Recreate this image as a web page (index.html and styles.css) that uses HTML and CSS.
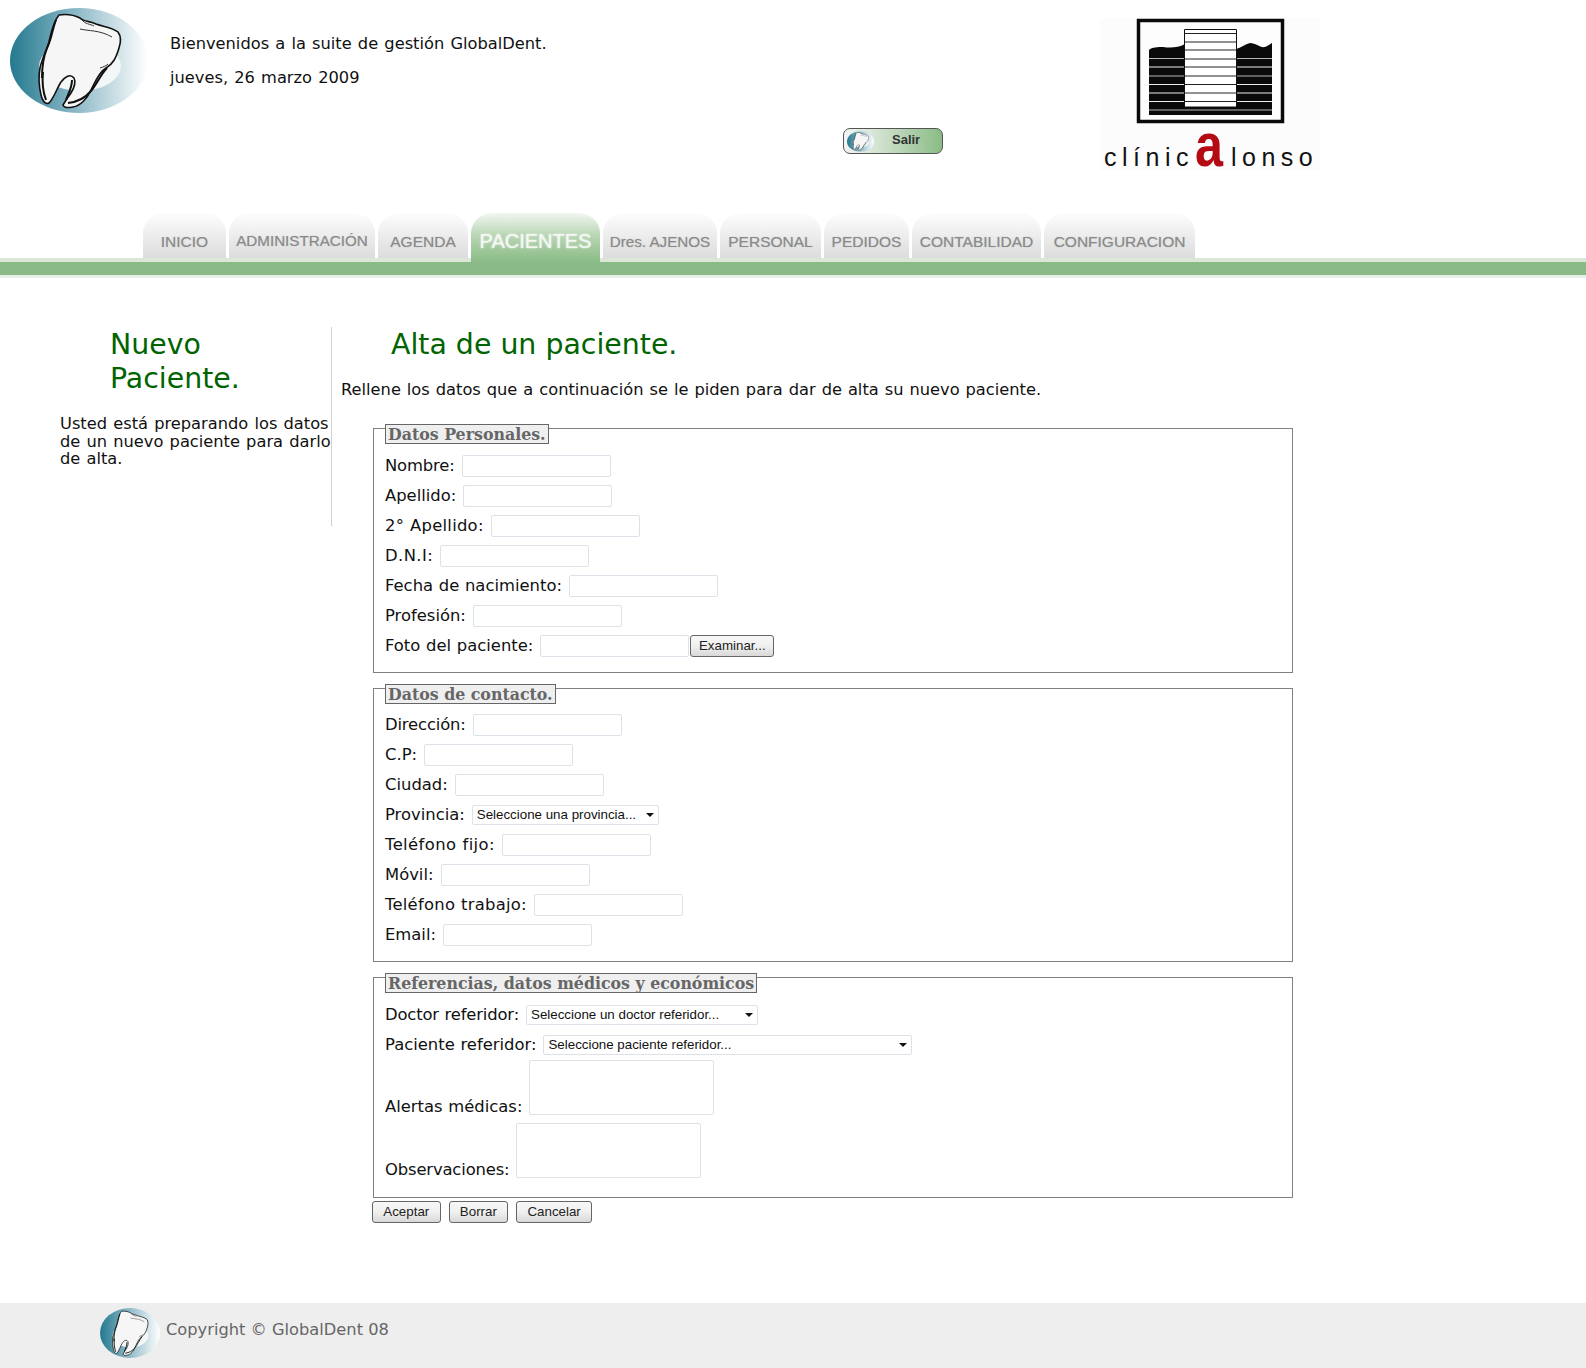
FILE: index.html
```html
<!DOCTYPE html>
<html lang="es">
<head>
<meta charset="utf-8">
<title>GlobalDent</title>
<link rel="stylesheet" href="styles.css">
</head>
<body>
<svg class="defs" width="0" height="0" aria-hidden="true">
  <defs>
    <linearGradient id="globe" x1="0" x2="1" y1="0" y2="0">
      <stop offset="0" stop-color="#24798f"/>
      <stop offset=".45" stop-color="#86b5c4"/>
      <stop offset="1" stop-color="#ffffff"/>
    </linearGradient>
    <symbol id="tooth" viewBox="10 8 138 105" preserveAspectRatio="none">
      <ellipse cx="79" cy="60.500" rx="69" ry="52.500" fill="url(#globe)"/>
      <ellipse cx="80" cy="66" rx="41" ry="25" fill="#f4f7f8"/>
      <path d="M59 15C66 14 74 15 80 18C84 22 90 21 96 24C104 27 112 27 118 32C121 36 121 42 119 48C116 58 113 64 106 68C99 72 95 82 91 90C87 99 80 106 73 107C68 108 64 108 63 105C66 100 68 97 71 93C74 88 76 82 74 78C70 73 65 77 61 82C57 88 54 98 49 103C45 105 42 100 41 95C39 86 38 78 40 68C42 58 47 50 49 42C51 33 53 22 59 15Z" fill="#f6f6f6" stroke="#111" stroke-width="1.600" stroke-linejoin="round"/>
      <path d="M56 20C52 30 52 38 47 48C43 58 42 68 42 78M43 72C42 82 43 92 46 100M107 68C100 75 96 86 90 92C85 98 77 102 68 103M72 80C72 88 68 94 66 100" fill="none" stroke="#111" stroke-width="2"/>
      <path d="M80 29C88 31 100 30 112 37M82 20C85 24 90 24 94 26M100 68C103 67 106 66 108 64" fill="none" stroke="#333" stroke-width="1"/>
    </symbol>
  </defs>
</svg>

<div class="page">
  <header class="header">
    <svg class="logo" viewBox="0 0 138 105"><use href="#tooth" width="138" height="105"/></svg>
    <div class="welcome">
      <p>Bienvenidos a la suite de gestión GlobalDent.</p>
      <p>jueves, 26 marzo 2009</p>
    </div>
    <a class="exit" href="#">
      <svg class="exit-icon" viewBox="0 0 138 105"><use href="#tooth" width="138" height="105"/></svg>
      <span>Salir</span>
    </a>
    <svg class="clinic" viewBox="1100 18 220 152">
      <rect x="1100" y="18" width="220" height="152" fill="#fcfcfc"/>
      <rect x="1138.500" y="20.500" width="144" height="101" fill="#fdfdfd" stroke="#0a0a0a" stroke-width="3.500"/>
      <path d="M1149 115V50C1152 47 1158 47 1163 47C1170 48 1178 48 1185 44V115ZM1236 115V49C1241 48 1245 44 1250 43C1256 43 1260 48 1265 47C1268 46 1270 44 1272 43V115Z" fill="#0a0a0a"/>
      <rect x="1149" y="107" width="123" height="8" fill="#0a0a0a"/>
      <g stroke-width="1.200">
        <path d="M1149 58.500H1185M1236 58.500H1272M1149 76H1185M1236 76H1272M1149 110H1272" stroke="#b5b5b5"/>
        <path d="M1149 67H1185M1236 67H1272M1149 84.500H1185M1236 84.500H1272M1149 93H1185M1236 93H1272M1149 101.500H1185M1236 101.500H1272" stroke="#eee"/>
      </g>
      <path d="M1184.500 107V29.500H1236.500V107Z" fill="#fff" stroke="#111" stroke-width="1"/>
      <path d="M1185 33.500H1236M1185 42H1236M1185 50H1236M1185 59H1236M1185 67H1236M1185 76H1236M1185 84.500H1236M1185 93H1236M1185 101.500H1236" stroke="#222" stroke-width="1"/>
      <text class="clinic-text" x="1104" y="166">clínic</text>
      <text class="clinic-a" x="1195" y="166" textLength="28" lengthAdjust="spacingAndGlyphs">a</text>
      <text class="clinic-text" x="1231" y="166">lonso</text>
    </svg>
  </header>

  <nav class="tabs">
    <a class="tab" href="#">INICIO</a>
    <a class="tab tab-up" href="#">ADMINISTRACIÓN</a>
    <a class="tab" href="#">AGENDA</a>
    <a class="tab tab-active" href="#">PACIENTES</a>
    <a class="tab tab-small" href="#">Dres. AJENOS</a>
    <a class="tab" href="#">PERSONAL</a>
    <a class="tab" href="#">PEDIDOS</a>
    <a class="tab" href="#">CONTABILIDAD</a>
    <a class="tab" href="#">CONFIGURACION</a>
  </nav>
  <div class="bar"></div>

  <div class="content">
    <aside class="side">
      <h2 class="side-title">Nuevo Paciente.</h2>
      <p class="side-text">Usted está preparando los datos de un nuevo paciente para darlo de alta.</p>
    </aside>
    <main class="main">
      <h1 class="main-title">Alta de un paciente.</h1>
      <p class="intro">Rellene los datos que a continuación se le piden para dar de alta su nuevo paciente.</p>
      <form>
        <fieldset class="group">
          <legend class="group-title">Datos Personales.</legend>
          <div class="row"><label class="tight">Nombre:</label><input type="text"></div>
          <div class="row"><label>Apellido:</label><input type="text"></div>
          <div class="row"><label class="roomy">2° Apellido:</label><input type="text"></div>
          <div class="row"><label class="loose">D.N.I:</label><input type="text"></div>
          <div class="row"><label>Fecha de nacimiento:</label><input type="text"></div>
          <div class="row"><label>Profesión:</label><input type="text"></div>
          <div class="row"><label>Foto del paciente:</label><span class="file"><input type="text"><button type="button" class="btn btn-file">Examinar...</button></span></div>
        </fieldset>
        <fieldset class="group group-contact">
          <legend class="group-title">Datos de contacto.</legend>
          <div class="row"><label class="tight">Dirección:</label><input type="text"></div>
          <div class="row"><label>C.P:</label><input type="text"></div>
          <div class="row"><label>Ciudad:</label><input type="text"></div>
          <div class="row"><label>Provincia:</label><select class="sel-province"><option>Seleccione una provincia...</option></select></div>
          <div class="row"><label class="loose">Teléfono fijo:</label><input type="text"></div>
          <div class="row"><label>Móvil:</label><input type="text"></div>
          <div class="row"><label class="roomy">Teléfono trabajo:</label><input type="text"></div>
          <div class="row"><label>Email:</label><input type="text"></div>
        </fieldset>
        <fieldset class="group group-refs">
          <legend class="group-title">Referencias, datos médicos y económicos</legend>
          <div class="row"><label class="tight">Doctor referidor:</label><select class="sel-doctor"><option>Seleccione un doctor referidor...</option></select></div>
          <div class="row"><label>Paciente referidor:</label><select class="sel-patient"><option>Seleccione paciente referidor...</option></select></div>
          <div class="row row-area"><label>Alertas médicas:</label><textarea></textarea></div>
          <div class="row row-area"><label class="tight">Observaciones:</label><textarea></textarea></div>
        </fieldset>
        <div class="actions">
          <button type="button" class="btn">Aceptar</button>
          <button type="button" class="btn">Borrar</button>
          <button type="button" class="btn">Cancelar</button>
        </div>
      </form>
    </main>
  </div>

  <footer class="footer">
    <svg class="footer-logo" viewBox="0 0 138 105" preserveAspectRatio="none"><use href="#tooth" width="138" height="105"/></svg>
    <span>Copyright © GlobalDent 08</span>
  </footer>
</div>
</body>
</html>
```
FILE: styles.css
```css
* { box-sizing: border-box; }
html, body { margin: 0; padding: 0; }
body {
  background: #fff;
  color: #111;
  font-family: "DejaVu Sans", Verdana, sans-serif;
  font-size: 16.250px;
  word-spacing: 1px;
}
.defs { position: absolute; }
.page { display: flex; flex-direction: column; min-height: 1368px; }

/* header */
.header { display: flex; align-items: flex-start; height: 213px; padding: 8px 0 0 10px; }
.logo { width: 138px; height: 105px; flex: none; }
.welcome { width: 695px; flex: none; padding: 26px 0 0 22px; }
.welcome p { margin: 0 0 15px; line-height: 19px; }
.exit {
  flex: none;
  display: flex;
  align-items: center;
  width: 100px;
  height: 26px;
  margin-top: 120px;
  padding-left: 3px;
  border: 1px solid #555;
  border-radius: 7px;
  background: linear-gradient(90deg, #f4f4f4 0, #d8e6d6 30%, #8abb86 100%);
  color: #333;
  font: bold 13px "Liberation Sans", Arial, sans-serif;
  text-decoration: none;
}
.exit-icon { width: 27px; height: 21px; flex: none; }
.exit span { margin: 0 0 3px 18px; }
.clinic { flex: none; width: 220px; height: 152px; margin: 10px 0 0 157px; overflow: visible; }
.clinic-text { font: 25px "Liberation Sans", Arial, sans-serif; letter-spacing: 5.500px; fill: #111; }
.clinic-a { font: bold 62px "Liberation Sans", Arial, sans-serif; fill: #b30a14; }

/* tabs */
.tabs {
  display: grid;
  grid-template-columns: 83px 146px 90px 129px 114px 101px 85px 129px 151px;
  column-gap: 3px;
  align-items: start;
  height: 45px;
  padding-left: 143px;
}
.tab {
  display: flex;
  justify-content: center;
  align-items: center;
  height: 45px;
  padding-top: 12px;
  border-radius: 22px 22px 0 0 / 20px 20px 0 0;
  background: linear-gradient(180deg, #fdfdfd 0, #f0f0f0 40%, #dcdcdc 100%);
  color: #8a8a8a;
  font: 15.500px "Liberation Sans", Arial, sans-serif;
  text-decoration: none;
  text-shadow: 0 0 1px rgba(130, 130, 130, .5);
  word-spacing: 0;
}
.tab-up { padding-top: 9px; font-size: 15.200px; }
.tab-small { font-size: 15.200px; }
.tab-active {
  position: relative;
  z-index: 1;
  height: 49px;
  padding-top: 8px;
  margin-bottom: -4px;
  background: linear-gradient(180deg, #f2f7f1 0, #b9d6b5 45%, #8abb86 100%);
  color: #f4f8f3;
  font-size: 20px;
  text-shadow: 0 0 2px rgba(255, 255, 255, .9);
}
.bar {
  height: 20px;
  border-top: 4px solid #dce7da;
  border-bottom: 3px solid #e8f1e7;
  background: #8abb86;
}

/* content */
.content { display: flex; align-items: flex-start; padding-top: 49px; }
.side { flex: none; width: 332px; height: 199px; padding-left: 60px; border-right: 1px solid #d0d0d0; }
.side-title {
  width: 170px;
  margin: 1px 0 20px 50px;
  color: #006400;
  font-size: 28.400px;
  font-weight: normal;
  line-height: 33.500px;
  word-spacing: 0;
}
.side-text { margin: 0; line-height: 17.500px; }
.main { flex: none; width: 960px; padding-left: 9px; }
.main-title { margin: 1px 0 0 50px; color: #006400; font-size: 28.400px; font-weight: normal; line-height: 33px; word-spacing: 0; }
.intro { margin: 19px 0 0; line-height: 19px; word-spacing: .8px; }

/* form */
form { margin: 19px 0 0 32px; width: 920px; }
.group {
  display: block;
  min-width: 0;
  margin: 0 0 5.500px;
  padding: 24.500px 10px 11px 11px;
  border: 1px solid #808080;
}
.group-contact { padding-top: 23.500px; }
.group-refs { margin-bottom: 3px; }
.group-title {
  position: relative;
  top: 6px;
  margin: 0 0 -12px;
  padding: 0 2px;
  height: 20px;
  border: 1px solid #666;
  background: #efefef;
  color: #666;
  font: bold 15.800px/20px "DejaVu Serif", Georgia, serif;
  word-spacing: 0;
}
.row { display: flex; align-items: center; gap: 7px; height: 30px; }
.row label { font-size: 16.400px; line-height: 19px; white-space: nowrap; word-spacing: .5px; }
.row label.loose { letter-spacing: .4px; }
.row label.roomy { letter-spacing: .25px; }
.row label.tight { letter-spacing: -.15px; }
input[type="text"] {
  width: 149px;
  height: 22px;
  padding: 1px 2px;
  border: 1px solid #dde1e8;
  border-radius: 2px;
  background: #fff;
}
.file { display: flex; align-items: center; gap: 1px; }
select {
  appearance: none;
  height: 20px;
  padding: 0 4px;
  border: 1px solid #dde1e8;
  border-radius: 2px;
  background: #fff url("data:image/svg+xml,%3Csvg xmlns='http://www.w3.org/2000/svg' width='8' height='4'%3E%3Cpath d='M0 0h8L4 4z' fill='%23111'/%3E%3C/svg%3E") no-repeat right 4px center;
  color: #111;
  font: 13.333px "Liberation Sans", Arial, sans-serif;
  word-spacing: 0;
}
.sel-province { width: 187px; }
.sel-doctor { width: 232px; }
.sel-patient { width: 369px; }
.row-area { align-items: flex-end; height: auto; margin-bottom: 8px; }
.row-area label { margin-bottom: -1px; }
textarea {
  display: block;
  width: 185px;
  height: 55px;
  padding: 2px;
  border: 1px solid #dde1e8;
  border-radius: 2px;
  resize: none;
}
.btn {
  height: 22px;
  padding: 0 10.300px;
  border: 1px solid #666;
  border-radius: 3px;
  background: linear-gradient(180deg, #f7f7f7 0, #f0f0f0 50%, #d8d8d8 100%);
  color: #222;
  font: 13.333px "Liberation Sans", Arial, sans-serif;
  word-spacing: 0;
}
.btn-file { width: 84px; padding: 0; }
.actions { display: flex; gap: 8px; margin-left: -1px; }

/* footer */
.footer {
  display: flex;
  align-items: center;
  gap: 6px;
  height: 65px;
  margin-top: auto;
  padding: 0 0 5px 100px;
  background: #eee;
  color: #666;
  word-spacing: 0;
}
.footer-logo { width: 60px; height: 50px; flex: none; }
.footer span { margin-bottom: 8px; }
```
